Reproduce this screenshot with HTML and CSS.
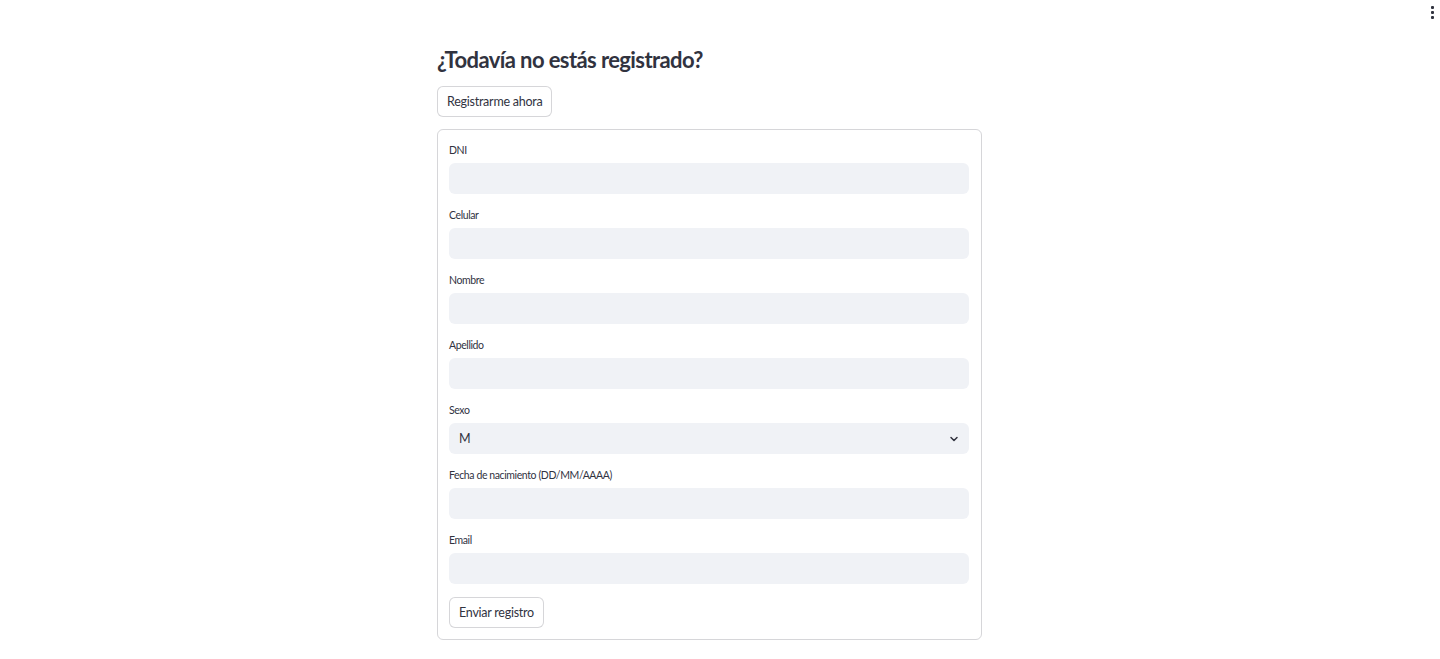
FILE: index.html
```html
<!DOCTYPE html>
<html lang="es">
<head>
<meta charset="utf-8">
<title>Registro</title>
<link rel="stylesheet" href="styles.css">
</head>
<body>
<div class="menu" aria-label="menu">
  <span class="dot"></span><span class="dot"></span><span class="dot"></span>
</div>
<main class="page">
  <div class="block">
    <h3 class="title">¿Todavía no estás registrado?</h3>
    <button class="btn btn-top" type="button">Registrarme ahora</button>
    <form class="form">
      <div class="field"><label class="label">DNI</label><input class="input" type="text"></div>
      <div class="field"><label class="label">Celular</label><input class="input" type="text"></div>
      <div class="field"><label class="label">Nombre</label><input class="input" type="text"></div>
      <div class="field"><label class="label">Apellido</label><input class="input" type="text"></div>
      <div class="field"><label class="label">Sexo</label>
        <div class="select"><span class="select-value">M</span>
          <svg class="chev" width="12" height="12" viewBox="0 0 24 24"><path d="M6 9l6 6 6-6" fill="none" stroke="#31333f" stroke-width="3" stroke-linecap="round" stroke-linejoin="round"/></svg>
        </div>
      </div>
      <div class="field"><label class="label">Fecha de nacimiento (DD/MM/AAAA)</label><input class="input" type="text"></div>
      <div class="field"><label class="label">Email</label><input class="input" type="text"></div>
      <button class="btn btn-submit" type="button">Enviar registro</button>
    </form>
  </div>
</main>
</body>
</html>
```
FILE: styles.css
```css
* { box-sizing: border-box; }
html, body { margin: 0; padding: 0; background: #ffffff; }
body {
  font-family: "Lato", "Liberation Sans", sans-serif;
  color: rgb(49, 51, 63);
  height: 659px;
  overflow: hidden;
}
.menu {
  position: absolute;
  top: 6px;
  left: 1431px;
  display: flex;
  flex-direction: column;
  gap: 2px;
}
.dot { width: 3px; height: 3px; background: #31333f; border-radius: 1px; }
.page {
  padding: 44px 21px 0 0;
  display: flex;
  justify-content: center;
}
.block { width: 545px; display: flex; flex-direction: column; }
.title {
  margin: 0;
  font-size: 22px;
  font-weight: 700;
  line-height: 32px;
  letter-spacing: -0.6px;
}
.btn {
  font-family: inherit;
  font-size: 12.5px;
  letter-spacing: -0.25px;
  color: rgb(49, 51, 63);
  background: #ffffff;
  border: 1px solid rgba(49, 51, 63, 0.2);
  border-radius: 6px;
  height: 31px;
  padding: 0 9px;
  align-self: flex-start;
  cursor: pointer;
}
.btn-top { margin-top: 10px; }
.form {
  margin: 12px 0 0;
  border: 1px solid rgba(49, 51, 63, 0.2);
  border-radius: 6px;
  padding: 10px 12px 11px 11px;
  display: flex;
  flex-direction: column;
  gap: 11px;
}
.field { display: flex; flex-direction: column; gap: 3px; }
.label { font-size: 10.5px; letter-spacing: -0.4px; line-height: 20px; }
.input, .select {
  height: 31px;
  width: 100%;
  border: none;
  border-radius: 6px;
  background: #f0f2f6;
  font-family: inherit;
  font-size: 12.5px;
  color: rgb(49, 51, 63);
  outline: none;
}
.select {
  display: flex;
  align-items: center;
  justify-content: space-between;
  padding: 0 9px 0 10px;
}
.chev { display: block; }
.btn-submit { margin-top: 2px; }
```
